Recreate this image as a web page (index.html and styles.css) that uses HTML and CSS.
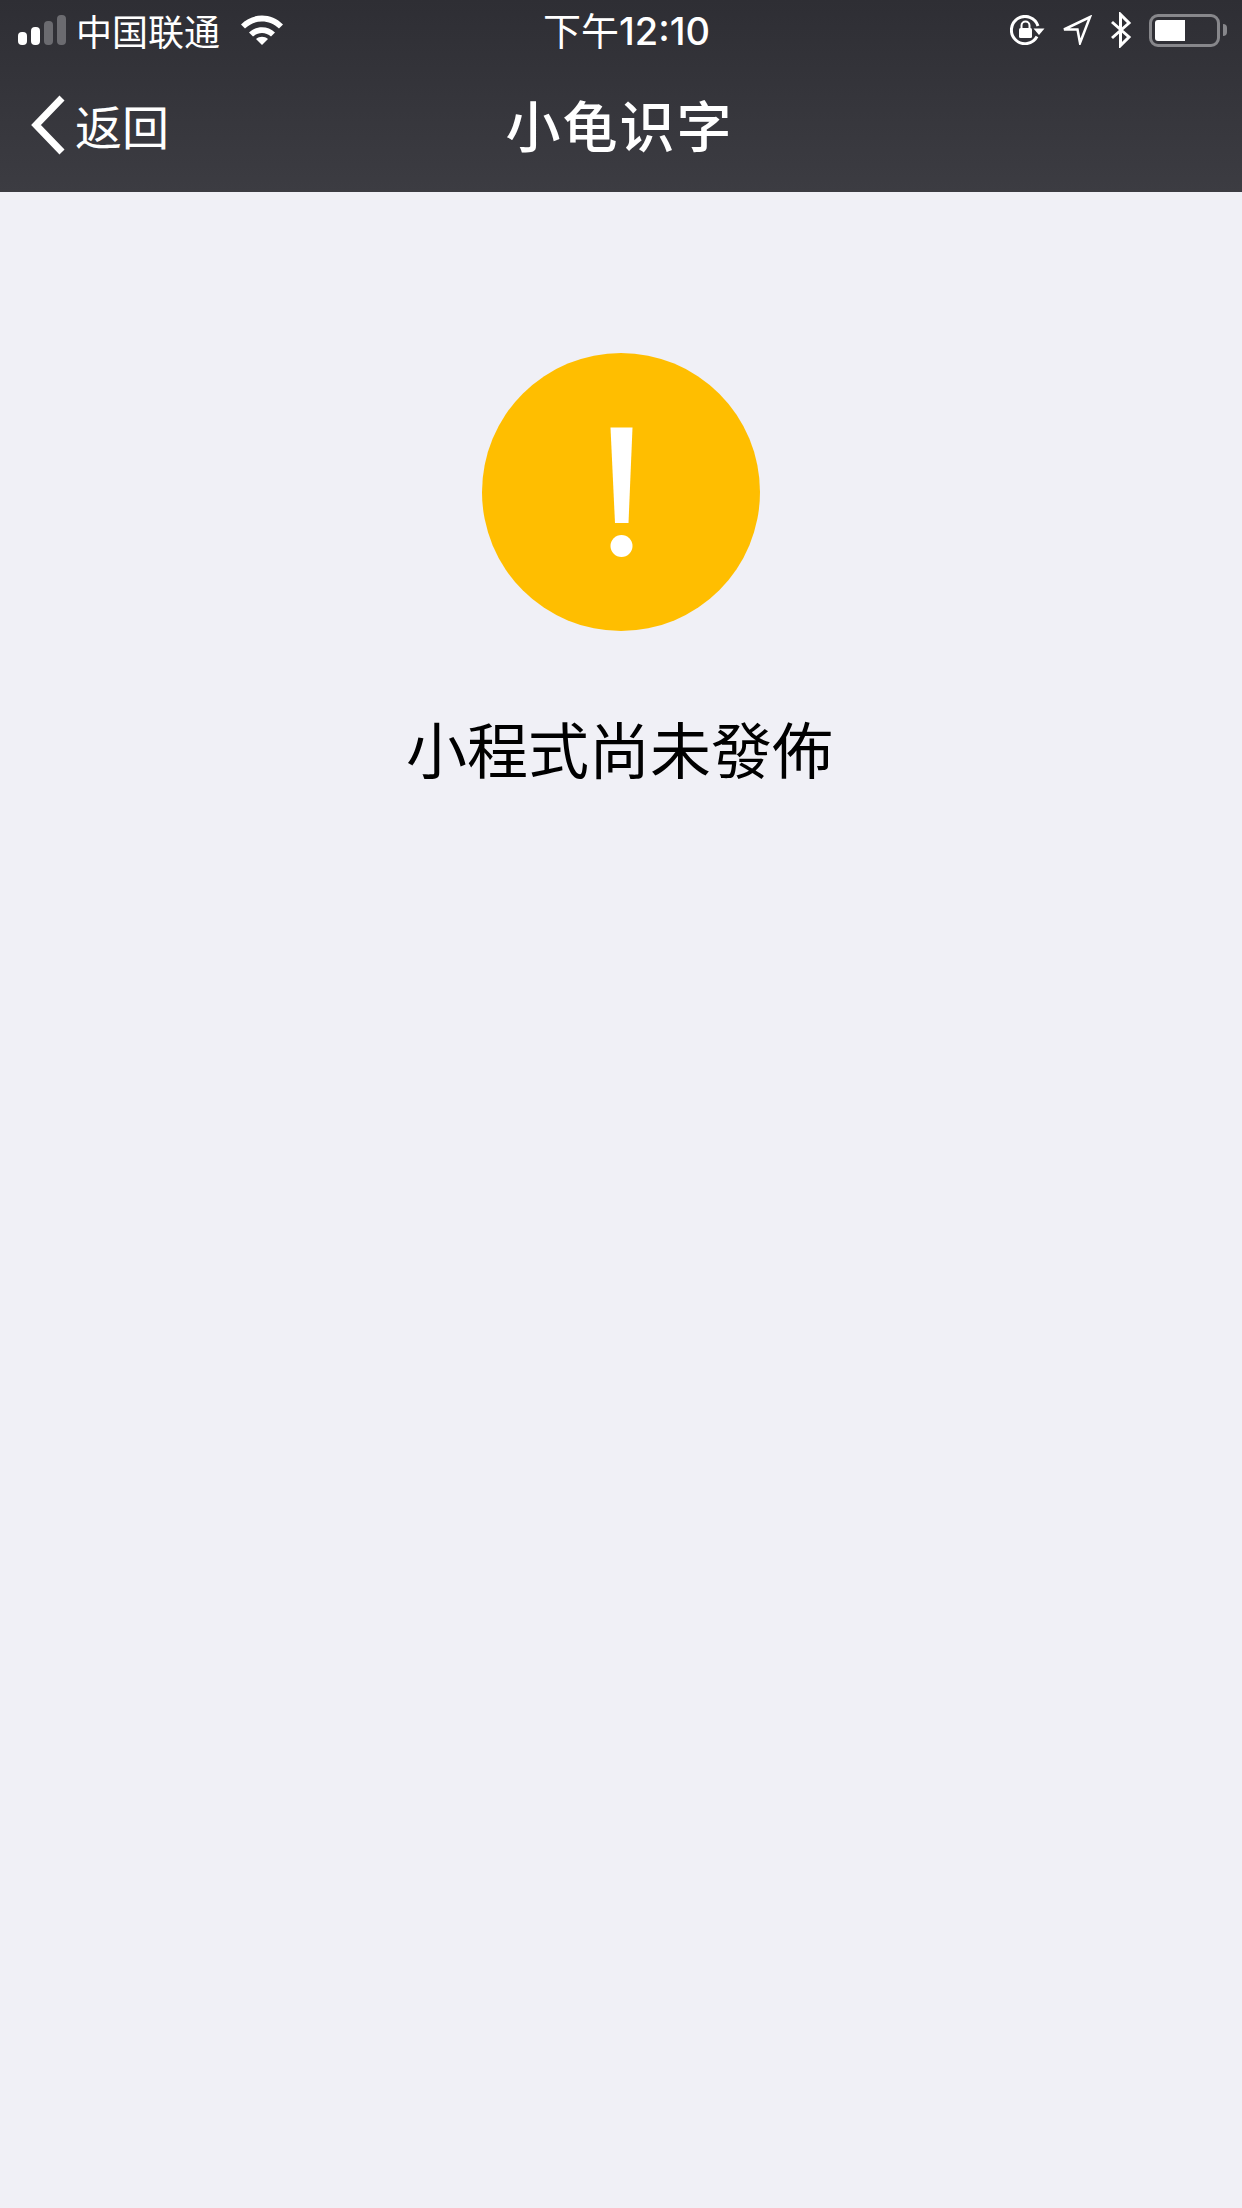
FILE: index.html
```html
<!DOCTYPE html>
<html lang="zh">
<head>
    <meta charset="UTF-8">
    <title>小龟识字</title>
    <link rel="stylesheet" href="styles.css">
</head>
<body>
    <header class="top">
        <div class="status">
            <div class="status-left">
                <div class="signal">
                    <span class="bar bar1"></span>
                    <span class="bar bar2"></span>
                    <span class="bar bar3 off"></span>
                    <span class="bar bar4 off"></span>
                </div>
                <span class="carrier">中国联通</span>
                <svg class="wifi" width="42" height="30" viewBox="0 0 42 30">
                    <path d="M0 9.500C11.500 -2.500 30.500 -2.500 42 9.500L38 13.500C28.500 4 13.500 4 4 13.500Z" fill="#fff"/>
                    <path d="M8 17.500C15 10.500 27 10.500 34 17.500L30 21.500C25 16.800 17 16.800 12 21.500Z" fill="#fff"/>
                    <path d="M15 24C18.500 21 23.500 21 27 24L21 30Z" fill="#fff"/>
                </svg>
            </div>
            <span class="time"><span class="time-cjk">下午</span>12:10</span>
            <div class="status-right">
                <svg class="lock" width="36" height="30" viewBox="0 0 36 30">
                    <path d="M27 21.500A13.600 13.600 0 1 1 28 11" fill="none" stroke="#fff" stroke-width="3"/>
                    <path d="M23.500 13.500H34.500L29 20Z" fill="#fff"/>
                    <rect x="9" y="13" width="13" height="10" rx="1.500" fill="#fff"/>
                    <path d="M11.500 13V10.500A4 4 0 0 1 19.500 10.500V13" fill="none" stroke="#fff" stroke-width="2"/>
                </svg>
                <svg class="arrow" width="30" height="30" viewBox="0 0 30 30">
                    <path d="M2 14.500L28 2L18 28L15.500 14.500Z" fill="none" stroke="#fff" stroke-width="2.500" stroke-linejoin="miter"/>
                </svg>
                <svg class="bt" width="22" height="36" viewBox="0 0 22 36">
                    <path d="M2 10L19 25L10.500 33.500V2.500L19 11L2 26" fill="none" stroke="#fff" stroke-width="3"/>
                </svg>
                <div class="battery"><div class="battery-fill"></div></div>
                <span class="battery-nub"></span>
            </div>
        </div>
        <nav class="nav">
            <a class="back" href="#">
                <svg width="36" height="60" viewBox="0 0 36 60">
                    <path d="M32 3L6 30L32 57" fill="none" stroke="#fff" stroke-width="7"/>
                </svg>
                <span class="back-text">返回</span>
            </a>
            <h1 class="title">小龟识字</h1>
        </nav>
    </header>

    <main class="content">
        <div class="warn">
            <svg width="278" height="278" viewBox="0 0 278 278">
                <circle cx="139" cy="139" r="139" fill="#ffbe00"/>
                <path d="M128.500 74.500H150.500L146.500 170H133Z" fill="#fff"/>
                <circle cx="139.500" cy="193" r="11" fill="#fff"/>
            </svg>
        </div>
        <p class="message">小程式尚未發佈</p>
    </main>
</body>
</html>
```

FILE: styles.css
```css
body {
    margin: 0;
    background-color: #f0f0f6;
    color: #000;
    font-family: "Noto Sans CJK SC", "Liberation Sans", sans-serif;
    min-height: 2208px;
}

.top {
    height: 192px;
    background: linear-gradient(#2e2e34, #3c3c42);
    color: #fff;
}

.status {
    height: 60px;
    display: flex;
    align-items: center;
    padding: 0 15px 0 18px;
}

.status-left {
    flex: 1;
    display: flex;
    align-items: center;
}

.status-right {
    flex: 1;
    display: flex;
    align-items: center;
    justify-content: flex-end;
}

.signal {
    display: flex;
    align-items: flex-end;
    gap: 4px;
    height: 30px;
    width: 48px;
}

.bar {
    width: 9px;
    background-color: #fff;
    border-radius: 4px;
}

.off {
    background-color: #6b6b70;
}

.bar1 { height: 13px; }
.bar2 { height: 18px; }
.bar3 { height: 24px; }
.bar4 { height: 30px; }

.carrier {
    margin-left: 10px;
    font-size: 36px;
    line-height: 58px;
}

.wifi {
    margin-left: 21px;
}

.time {
    font-size: 38px;
    font-weight: 500;
    line-height: 60px;
    font-family: Inter, "Liberation Sans", sans-serif;
    margin-left: 8px;
    white-space: nowrap;
}

.time-cjk {
    font-size: 38px;
    font-weight: 400;
    font-family: "Noto Sans CJK SC", sans-serif;
}

.lock {
    margin-right: 16px;
}

.arrow {
    margin-right: 18px;
}

.bt {
    margin-right: 17px;
}

.battery {
    width: 71px;
    height: 33px;
    box-sizing: border-box;
    border: 3px solid #87878b;
    border-radius: 9px;
    padding: 3px;
}

.battery-fill {
    width: 30px;
    height: 21px;
    background-color: #fff;
    border-radius: 3px 0 0 3px;
}

.battery-nub {
    width: 4px;
    height: 12px;
    margin-left: 3px;
    background-color: #87878b;
    border-radius: 0 4px 4px 0;
}

.nav {
    height: 132px;
    position: relative;
    display: flex;
    align-items: center;
    justify-content: center;
}

.back {
    position: absolute;
    left: 30px;
    top: 35px;
    display: flex;
    align-items: center;
    color: #fff;
    text-decoration: none;
}

.back-text {
    margin-left: 9px;
    font-size: 47px;
    line-height: 60px;
}

.title {
    margin: 0 3px 6px 0;
    font-size: 55px;
    font-weight: 500;
    letter-spacing: 2px;
    line-height: 70px;
}

.content {
    display: flex;
    flex-direction: column;
    align-items: center;
    padding-top: 161px;
}

.warn {
    height: 278px;
}

.warn svg {
    display: block;
}

.message {
    margin: 72px 3px 0 0;
    font-size: 61px;
    line-height: 90px;
    font-family: "Noto Sans CJK TC", sans-serif;
}
```
